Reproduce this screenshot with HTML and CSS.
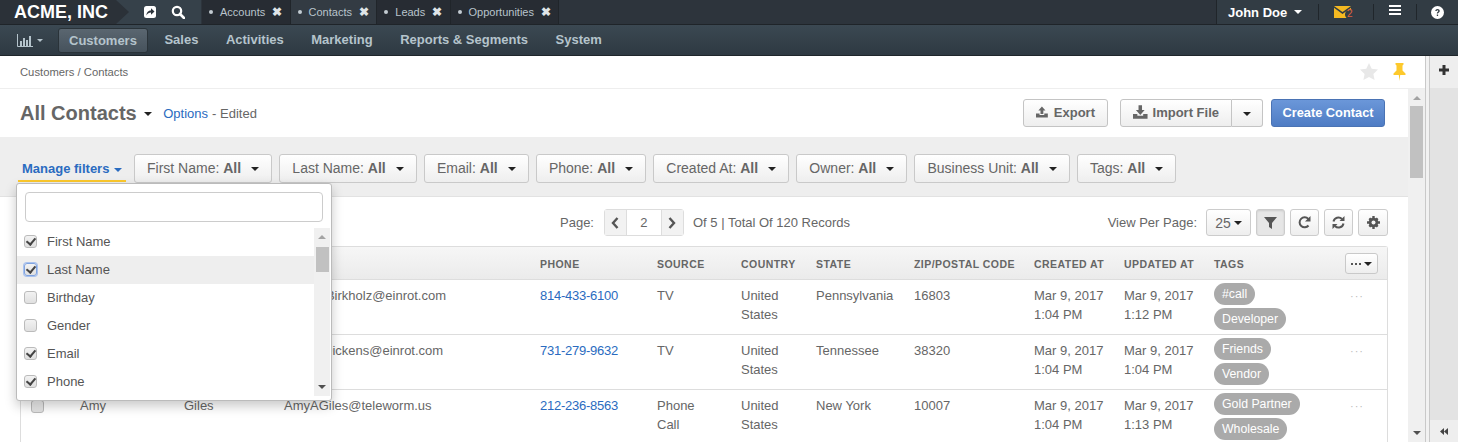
FILE: index.html

```html
<!DOCTYPE html>
<html>
<head>
  <title>All Contacts - Customers</title>
  <meta name="viewport" content="width=device-width, initial-scale=1.0">
  <link rel="stylesheet" href="styles.css">
</head>
<body>
  <header class="topbar">
    <div class="logo">ACME, INC</div>
    <div class="quick">
      <svg class="quick-icon" viewBox="0 0 14 14"><rect x="1" y="1" width="12" height="12" rx="2.5" fill="#fff"/><path d="M3.5 10.5c0-3.5 2-5 4.500-5V3.300L11.500 6.500 8 9.700V7.500c-2 0-3.500.8-4.500 3z" fill="#2c333b"/></svg>
      <svg class="quick-icon" viewBox="0 0 14 14"><circle cx="6" cy="6" r="4.200" fill="none" stroke="#fff" stroke-width="2.200"/><path d="M9 9l4 4" stroke="#fff" stroke-width="2.600" stroke-linecap="round"/></svg>
    </div>
    <nav class="tabs">
      <a class="tab"><i class="dot"></i>Accounts<b class="tab-close">&#10006;</b></a>
      <a class="tab tab-active"><i class="dot"></i>Contacts<b class="tab-close">&#10006;</b></a>
      <a class="tab"><i class="dot"></i>Leads<b class="tab-close">&#10006;</b></a>
      <a class="tab"><i class="dot"></i>Opportunities<b class="tab-close">&#10006;</b></a>
    </nav>
    <div class="user-area">
      <div class="user-cell user-name">John Doe <i class="caret caret-white"></i></div>
      <div class="user-cell user-mail">
        <svg width="18" height="12" viewBox="0 0 18 12"><path d="M0 0h17L8.500 6z" fill="#f5b921"/><path d="M0 1.800V12h17V1.800L8.500 8z" fill="#f5b921"/><circle cx="15.500" cy="8.500" r="4.500" fill="#323c44"/></svg>
        <span class="mail-count">2</span>
      </div>
      <div class="user-cell user-menu"><i class="burger"></i></div>
      <div class="user-cell user-help">
        <svg width="13" height="13" viewBox="0 0 13 13"><circle cx="6.500" cy="6.500" r="6.500" fill="#fff"/><path d="M4.300 5c0-1.300 1-2 2.200-2s2.200.7 2.200 1.900c0 1.500-1.700 1.500-1.700 2.700H5.800c0-1.900 1.500-1.800 1.500-2.700 0-.4-.4-.7-.8-.7-.5 0-.9.300-.9.800z" fill="#323c44"/><rect x="5.800" y="8.500" width="1.300" height="1.500" fill="#323c44"/></svg>
      </div>
    </div>
  </header>

  <nav class="navbar">
    <a class="nav-chart">
      <svg width="16" height="13" viewBox="0 0 16 13"><path d="M.5 0v12.500H16" fill="none" stroke="#b5c4cc"/><path d="M3 7h2v5H3zM6 4h2v8H6zM9 6h2v6H9zM12 2h2v10h-2z" fill="#b5c4cc"/></svg>
      <i class="caret caret-nav"></i>
    </a>
    <a class="nav-item nav-active">Customers</a>
    <a class="nav-item">Sales</a>
    <a class="nav-item">Activities</a>
    <a class="nav-item">Marketing</a>
    <a class="nav-item">Reports &amp; Segments</a>
    <a class="nav-item">System</a>
  </nav>

  <div class="workspace">
    <main class="main">
      <div class="breadcrumb">
        <span>Customers / Contacts</span>
        <div class="page-marks">
          <svg width="18" height="17" viewBox="0 0 18 17"><path d="M9 0l2.700 5.800 6.300.8-4.600 4.300 1.200 6.100L9 14l-5.600 3 1.200-6.100L0 6.600l6.300-.8z" fill="#e8e8e8"/></svg>
          <svg width="13" height="18" viewBox="0 0 13 18"><path d="M2.500 0h8v1.500L9.500 2.500v5l3 3V12H7.200l-.7 6-.7-6H.5v-1.500l3-3v-5l-1-1z" fill="#fdc92c"/></svg>
        </div>
      </div>

      <div class="content-wrap">
        <div class="content">
          <div class="title-row">
            <h1 class="page-title">All Contacts <i class="caret caret-dark"></i></h1>
            <a class="link options-link">Options</a>
            <span class="edited">- Edited</span>
            <div class="title-actions">
              <button class="btn btn-export">
                <svg width="15" height="14" viewBox="0 0 15 14"><path d="M7.500 0l4.500 5H9.300v4.500H5.700V5H3z" fill="#666"/><path d="M0 9h4.500v1.800h6V9H15v5H0z" fill="#666"/></svg>
                Export
              </button>
              <div class="btn-split">
                <button class="btn btn-import">
                  <svg width="15" height="14" viewBox="0 0 15 14"><path d="M5.700 0h3.600v5H12L7.500 10 3 5h2.700z" fill="#666"/><path d="M0 9h4.500v1.800h6V9H15v5H0z" fill="#666"/></svg>
                  Import File
                </button>
                <button class="btn btn-split-caret"><i class="caret caret-dark"></i></button>
              </div>
              <button class="btn btn-primary">Create Contact</button>
            </div>
          </div>

          <div class="filters">
            <a class="manage-filters">Manage filters <i class="caret caret-blue"></i></a>
            <button class="btn filter-btn">First Name: <b>All</b> <i class="caret caret-dark"></i></button>
            <button class="btn filter-btn">Last Name: <b>All</b> <i class="caret caret-dark"></i></button>
            <button class="btn filter-btn">Email: <b>All</b> <i class="caret caret-dark"></i></button>
            <button class="btn filter-btn">Phone: <b>All</b> <i class="caret caret-dark"></i></button>
            <button class="btn filter-btn">Created At: <b>All</b> <i class="caret caret-dark"></i></button>
            <button class="btn filter-btn">Owner: <b>All</b> <i class="caret caret-dark"></i></button>
            <button class="btn filter-btn">Business Unit: <b>All</b> <i class="caret caret-dark"></i></button>
            <button class="btn filter-btn">Tags: <b>All</b> <i class="caret caret-dark"></i></button>
          </div>

          <div class="pager-row">
            <div class="pager">
              <span>Page:</span>
              <div class="pager-box">
                <span class="pager-arrow"><svg width="8" height="12" viewBox="0 0 8 12"><path d="M6.500 1L2 6l4.500 5" fill="none" stroke="#555" stroke-width="2.400"/></svg></span>
                <span class="pager-num">2</span>
                <span class="pager-arrow"><svg width="8" height="12" viewBox="0 0 8 12"><path d="M1.500 1L6 6l-4.500 5" fill="none" stroke="#555" stroke-width="2.400"/></svg></span>
              </div>
              <span>Of 5 | Total Of 120 Records</span>
            </div>
            <div class="view-tools">
              <span class="view-label">View Per Page:</span>
              <button class="btn tool-btn per-page">25 <i class="caret caret-dark"></i></button>
              <button class="btn tool-btn tool-on">
                <svg width="13" height="13" viewBox="0 0 13 13"><path d="M0 1h13L8 7v6L5 11V7z" fill="#555"/></svg>
              </button>
              <button class="btn tool-btn">
                <svg width="13" height="13" viewBox="0 0 13 13"><path d="M10.500 9.500A5 5 0 1 1 10.300 3" fill="none" stroke="#555" stroke-width="2"/><path d="M12.500 0v5.500H7z" fill="#555"/></svg>
              </button>
              <button class="btn tool-btn">
                <svg width="13" height="13" viewBox="0 0 13 13"><path d="M1.500 5.500A5 5 0 0 1 10 3M11.500 7.500A5 5 0 0 1 3 10" fill="none" stroke="#555" stroke-width="2"/><path d="M12.500 0v5H7.500zM.5 13V8h5z" fill="#555"/></svg>
              </button>
              <button class="btn tool-btn tool-last">
                <svg width="13" height="13" viewBox="0 0 13 13"><mask id="gear-hole"><rect width="13" height="13" fill="#fff"/><circle cx="6.500" cy="6.500" r="2" fill="#000"/></mask><g fill="#555" mask="url(#gear-hole)"><circle cx="6.500" cy="6.500" r="4.800"/><path d="M5.300 0h2.400v13H5.300zM0 5.300h13v2.400H0zM1.500 3.200l1.700-1.700 8.300 8.300-1.700 1.700zM9.800 1.500l1.700 1.700-8.300 8.300-1.700-1.700z"/></g></svg>
              </button>
            </div>
          </div>

          <div class="grid-box">
            <table class="grid">
              <colgroup>
                <col class="c-check"><col class="c-first"><col class="c-last"><col class="c-email"><col class="c-phone"><col class="c-source"><col class="c-country"><col class="c-state"><col class="c-zip"><col class="c-created"><col class="c-updated"><col class="c-tags"><col class="c-act">
              </colgroup>
              <thead>
                <tr>
                  <th></th><th></th><th></th><th>Email</th><th>Phone</th><th>Source</th><th>Country</th><th>State</th><th>Zip/Postal Code</th><th>Created At</th><th>Updated At</th><th>Tags</th>
                  <th><span class="act-btn"><i class="act-dots"></i><i class="caret caret-dark"></i></span></th>
                </tr>
              </thead>
              <tbody>
                <tr>
                  <td></td><td></td><td></td><td>HelenTBirkholz@einrot.com</td><td><a class="link phone">814-433-6100</a></td><td>TV</td><td>United States</td><td>Pennsylvania</td><td>16803</td><td>Mar 9, 2017<br>1:04 PM</td><td>Mar 9, 2017<br>1:12 PM</td>
                  <td class="tag-cell"><span class="tag">#call</span><span class="tag">Developer</span></td><td class="row-act">&middot;&middot;&middot;</td>
                </tr>
                <tr>
                  <td></td><td></td><td></td><td>JoanMDickens@einrot.com</td><td><a class="link phone">731-279-9632</a></td><td>TV</td><td>United States</td><td>Tennessee</td><td>38320</td><td>Mar 9, 2017<br>1:04 PM</td><td>Mar 9, 2017<br>1:04 PM</td>
                  <td class="tag-cell"><span class="tag">Friends</span><span class="tag">Vendor</span></td><td class="row-act">&middot;&middot;&middot;</td>
                </tr>
                <tr>
                  <td><i class="check"></i></td><td>Amy</td><td>Giles</td><td>AmyAGiles@teleworm.us</td><td><a class="link phone">212-236-8563</a></td><td class="source-cell">Phone Call</td><td>United States</td><td>New York</td><td>10007</td><td>Mar 9, 2017<br>1:04 PM</td><td>Mar 9, 2017<br>1:13 PM</td>
                  <td class="tag-cell"><span class="tag">Gold Partner</span><span class="tag">Wholesale</span></td><td class="row-act">&middot;&middot;&middot;</td>
                </tr>
              </tbody>
            </table>
          </div>
        </div>

        <div class="scrollbar">
          <i class="arrow-up"></i>
          <i class="scroll-thumb"></i>
          <i class="arrow-down"></i>
        </div>

        <div class="filter-menu">
          <input class="filter-search" type="text">
          <div class="filter-list">
            <ul class="filter-items">
              <li><i class="check check-on"></i>First Name</li>
              <li class="filter-hover"><i class="check check-on check-focus"></i>Last Name</li>
              <li><i class="check"></i>Birthday</li>
              <li><i class="check"></i>Gender</li>
              <li><i class="check check-on"></i>Email</li>
              <li><i class="check check-on"></i>Phone</li>
            </ul>
            <div class="list-scroll">
              <i class="arrow-up"></i>
              <i class="list-thumb"></i>
              <i class="arrow-down"></i>
            </div>
          </div>
        </div>
      </div>
    </main>

    <div class="splitter"></div>

    <aside class="sidebar">
      <div class="side-top">
        <svg width="10" height="10" viewBox="0 0 10 10"><path d="M3.500 0h3v3.500H10v3H6.500V10h-3V6.500H0v-3h3.500z" fill="#333"/></svg>
      </div>
      <div class="side-body"></div>
      <div class="side-foot">
        <svg width="8" height="7" viewBox="0 0 8 7"><path d="M4 0v7L0 3.500zM8 0v7L4 3.500z" fill="#444"/></svg>
      </div>
    </aside>
  </div>
</body>
</html>
```

FILE: styles.css

```css
* {
  box-sizing: border-box;
}

html, body {
  margin: 0;
  height: 442px;
  overflow: hidden;
}

body {
  display: flex;
  flex-direction: column;
  font-family: "Liberation Sans", Arial, sans-serif;
  font-size: 13px;
  color: #666;
  background: #fff;
}

i {
  font-style: normal;
}

.link {
  color: #2a6bc0;
  text-decoration: none;
}

.caret {
  display: inline-block;
  width: 0;
  height: 0;
  vertical-align: middle;
  border-left: 4px solid transparent;
  border-right: 4px solid transparent;
  border-top: 4px solid #222;
}

.caret-white { border-top-color: #fff; }
.caret-blue { border-top-color: #2a6bc0; }
.caret-nav {
  border-left-width: 3px;
  border-right-width: 3px;
  border-top: 3px solid #b5c4cc;
}

/* top bar */
.topbar {
  flex: none;
  display: flex;
  height: 25px;
  background: linear-gradient(#36414a, #36414a) 0 0 / 201px 100% no-repeat #2d343c;
  border-bottom: 1px solid #1f2429;
}

.logo {
  width: 129px;
  padding: 2px 0 0 14px;
  font-size: 18px;
  line-height: 20px;
  font-weight: bold;
  color: #fff;
  background: #2b3138;
  clip-path: polygon(0 0, 116px 0, 129px 12px, 116px 24px, 0 24px);
}

.quick {
  width: 73px;
  display: flex;
  align-items: center;
  gap: 14px;
  padding-left: 14px;
}

.quick-icon {
  width: 14px;
  height: 14px;
}

.tabs {
  display: flex;
}

.tab {
  display: flex;
  align-items: center;
  padding: 0 7.300px 0 7px;
  font-size: 11px;
  color: #b9c4cc;
  background: #272c33;
  border-right: 1px solid #20252a;
}

.tab-active {
  background: #333b43;
}

.dot {
  width: 4px;
  height: 4px;
  margin-right: 7px;
  border-radius: 50%;
  background: #c3ccd2;
}

.tab-close {
  margin-left: 7px;
  font-size: 12px;
  color: #dfe4e7;
}

.user-area {
  margin-left: auto;
  width: 242px;
  display: flex;
  align-items: center;
  background: #323c44;
  border-left: 1px solid #20252a;
}

.user-cell {
  height: 16px;
  display: flex;
  align-items: center;
  justify-content: center;
  border-right: 1px solid #20262b;
}

.user-name {
  width: 102px;
  justify-content: flex-start;
  gap: 7px;
  padding-left: 11px;
  font-weight: bold;
  font-size: 13px;
  color: #fff;
}

.user-mail {
  width: 55px;
  position: relative;
  padding-right: 7px;
}

.mail-count {
  position: absolute;
  left: 28px;
  top: 5px;
  font-size: 10px;
  line-height: 10px;
  color: #e0603f;
}

.user-menu {
  width: 43px;
}

.burger {
  width: 12px;
  height: 10px;
  margin-top: -5px;
  border-top: 2px solid #fff;
  border-bottom: 2px solid #fff;
  background: linear-gradient(#fff, #fff) center / 100% 2px no-repeat;
}

.user-help {
  flex: 1;
  border-right: 0;
}

/* main nav */
.navbar {
  flex: none;
  display: flex;
  align-items: center;
  height: 31px;
  padding-left: 17px;
  background: linear-gradient(#3b4852, #2e3942);
  border-bottom: 1px solid #1f262b;
}

.nav-chart {
  display: flex;
  align-items: center;
  gap: 4px;
  width: 41px;
}

.nav-item {
  padding: 0 11px;
  height: 25px;
  line-height: 24px;
  margin-right: 5.500px;
  font-weight: bold;
  font-size: 13px;
  color: #b5c4cc;
}

.nav-active {
  background: linear-gradient(#5a6670, #46525c);
  border: 1px solid #2a3339;
  border-radius: 3px;
  padding: 0 10px;
}

/* page frame */
.workspace {
  flex: 1;
  display: flex;
  min-height: 0;
}

.main {
  flex: 1;
  min-width: 0;
  display: flex;
  flex-direction: column;
}

.breadcrumb {
  flex: none;
  height: 33px;
  padding: 0 19px 0 20px;
  display: flex;
  align-items: center;
  justify-content: space-between;
  font-size: 11.250px;
  border-bottom: 1px solid #eee;
}

.page-marks {
  display: flex;
  align-items: center;
  gap: 15px;
  margin-top: -1px;
}

.content-wrap {
  flex: 1;
  min-height: 0;
  display: flex;
  position: relative;
}

.content {
  flex: 1;
  min-width: 0;
  overflow: hidden;
}

.title-row {
  height: 48px;
  display: flex;
  align-items: center;
  padding: 0 23px 0 20px;
}

.page-title {
  margin: 0 11px 0 0;
  font-size: 20px;
  font-weight: bold;
  color: #666;
}

.page-title .caret {
  margin-left: 2px;
}

.options-link {
  margin-right: 4px;
}

.title-actions {
  margin-left: auto;
  display: flex;
  gap: 12px;
}

.btn {
  height: 28px;
  padding: 0 12px;
  font: 13px "Liberation Sans", Arial, sans-serif;
  color: #666;
  background: linear-gradient(#fff, #eee);
  border: 1px solid #c4c4c4;
  border-radius: 3px;
  white-space: nowrap;
}

.btn-export,
.btn-import {
  display: flex;
  align-items: center;
  gap: 5px;
  padding-bottom: 2px;
  font-weight: bold;
  font-size: 13px;
}

.btn-export {
  width: 85px;
  gap: 6px;
}

.btn-import {
  width: 112px;
  border-radius: 3px 0 0 3px;
}

.btn-split {
  display: flex;
  margin-right: -4px;
}

.btn-split-caret {
  width: 31px;
  padding: 0;
  border-left: 0;
  border-radius: 0 3px 3px 0;
}

.btn-primary {
  width: 114px;
  padding: 0 0 2px;
  font-size: 12.800px;
  font-weight: bold;
  color: #fff;
  background: linear-gradient(#6b97d9, #4e7cc4);
  border-color: #4a73b4;
}

/* filters */
.filters {
  height: 60px;
  display: flex;
  align-items: center;
  gap: 7px;
  padding: 3px 0 0 18px;
  background: #eee;
  border-bottom: 1px solid #e2e2e2;
}

.manage-filters {
  width: 108px;
  height: 27px;
  margin: 1px 1px 0 0;
  padding: 6px 0 0 4px;
  font-weight: bold;
  color: #2a6bc0;
  border-bottom: 2px solid #fdc92c;
}

.manage-filters .caret {
  margin-left: 1px;
}

.filter-btn {
  height: 29px;
  font-size: 14px;
  border-color: #c9c9c9;
}

.filter-btn b {
  color: #666;
}

.filter-btn .caret {
  margin-left: 6.350px;
}

/* pager */
.pager-row {
  height: 49px;
  padding: 2px 20px 0 560px;
  display: flex;
  align-items: center;
  justify-content: space-between;
}

.pager {
  display: flex;
  align-items: center;
  gap: 10px;
}

.pager-box {
  width: 80px;
  height: 27px;
  margin-right: -1px;
  display: flex;
  border: 1px solid #ddd;
  border-radius: 3px;
}

.pager-arrow {
  width: 21px;
  display: flex;
  align-items: center;
  justify-content: center;
  background: #f2f2f2;
}

.pager-num {
  flex: 1;
  text-align: center;
  line-height: 25px;
  font-size: 13px;
  border-left: 1px solid #ddd;
  border-right: 1px solid #ddd;
}

.view-tools {
  display: flex;
  align-items: center;
  gap: 5px;
}

.view-label {
  margin-right: 4px;
}

.tool-btn {
  width: 29px;
  height: 27px;
  padding: 0;
  display: flex;
  align-items: center;
  justify-content: center;
  border-color: #ccc;
}

.tool-last {
  width: 30px;
}

.per-page {
  width: 45px;
  gap: 3px;
  font-size: 14px;
}

.tool-on {
  background: #e6e6e6;
  box-shadow: inset 0 1px 2px rgba(0, 0, 0, .12);
}

/* table */
.grid-box {
  width: 1368px;
  margin-left: 20px;
  border: 1px solid #ddd;
  border-bottom: 0;
  border-radius: 3px 3px 0 0;
}

.grid {
  width: 100%;
  table-layout: fixed;
  border-collapse: collapse;
}

.c-check { width: 59px; }
.c-first { width: 104px; }
.c-last { width: 100px; }
.c-email { width: 256px; }
.c-phone { width: 117px; }
.c-source { width: 84px; }
.c-country { width: 75px; }
.c-state { width: 98px; }
.c-zip { width: 120px; }
.c-created { width: 90px; }
.c-updated { width: 90px; }
.c-tags { width: 131px; }

.grid th {
  height: 32px;
  padding: 2px 0 0;
  text-align: left;
  text-transform: uppercase;
  font-size: 10.500px;
  letter-spacing: .45px;
  color: #666;
  background: linear-gradient(#f6f6f6, #ebebeb);
  border-bottom: 1px solid #ddd;
}

.grid td {
  height: 55px;
  padding: 6px 8px 0 0;
  vertical-align: top;
  line-height: 19px;
  border-bottom: 1px solid #ddd;
}

.grid td:first-child {
  padding: 10px 0 0 10px;
}

.grid .source-cell {
  padding-right: 30px;
}

.phone {
  letter-spacing: -.25px;
}

.grid .tag-cell {
  padding: 3px 0 0;
  line-height: 0;
}

.tag {
  display: block;
  width: fit-content;
  height: 22px;
  margin-bottom: 3px;
  padding: 0 8px;
  line-height: 22px;
  font-size: 12.300px;
  color: #fff;
  background: #aaa;
  border-radius: 11px;
}

.grid .row-act {
  padding: 0 0 0 5px;
  font-size: 11px;
  line-height: 32px;
  letter-spacing: 1px;
  color: #bbb;
}

.act-btn {
  display: flex;
  align-items: center;
  justify-content: center;
  gap: 3px;
  width: 33px;
  height: 21px;
  background: linear-gradient(#fff, #eee);
  border: 1px solid #c9c9c9;
  border-radius: 3px;
}

.act-dots {
  width: 10px;
  height: 2px;
  background: repeating-linear-gradient(90deg, #555 0 2px, transparent 2px 4px);
}

.check {
  display: block;
  flex: none;
  width: 13px;
  height: 13px;
  background: linear-gradient(#f2f2f2, #e0e0e0);
  border: 1px solid #bbb;
  border-radius: 3px;
}

.check-on {
  position: relative;
}

.check-on::after {
  content: "";
  position: absolute;
  left: 3px;
  top: 0;
  width: 4px;
  height: 7px;
  border: solid #444;
  border-width: 0 2px 2px 0;
  transform: rotate(40deg);
}

.check-focus {
  border-color: #7fa3e0;
  box-shadow: 0 0 0 1px #a9c2ee;
}

/* page scrollbar */
.scrollbar {
  width: 17px;
  flex: none;
  display: flex;
  flex-direction: column;
  align-items: center;
  background: #f0f0f0;
}

.arrow-up,
.arrow-down {
  width: 0;
  height: 0;
  border-left: 4px solid transparent;
  border-right: 4px solid transparent;
}

.arrow-up {
  margin-top: 7px;
  border-bottom: 4px solid #a3a3a3;
}

.arrow-down {
  margin-top: auto;
  margin-bottom: 7px;
  border-top: 4px solid #505050;
}

.scroll-thumb {
  width: 13px;
  height: 72px;
  margin-top: 6px;
  background: #c1c1c1;
}

/* filter dropdown */
.filter-menu {
  position: absolute;
  left: 16px;
  top: 94px;
  width: 316px;
  height: 218px;
  padding: 8px 1px 0 0;
  background: #fff;
  border: 1px solid #bbb;
  border-radius: 3px;
  box-shadow: 0 5px 12px rgba(0, 0, 0, .22);
}

.filter-search {
  display: block;
  width: 298px;
  height: 30px;
  margin-left: 8px;
  border: 1px solid #ccc;
  border-radius: 4px;
  background: #fff;
}

.filter-list {
  height: 168px;
  margin-top: 6px;
  display: flex;
}

.filter-items {
  flex: 1;
  margin: 0;
  padding: 0;
  list-style: none;
}

.filter-items li {
  height: 28px;
  display: flex;
  align-items: center;
  gap: 10px;
  padding: 0 0 2px 7px;
  font-size: 13px;
  color: #555;
}

.filter-hover {
  background: #eee;
}

.list-scroll {
  width: 16px;
  display: flex;
  flex-direction: column;
  align-items: center;
  background: #f0f0f0;
}

.list-thumb {
  width: 13px;
  height: 25px;
  margin-top: 8px;
  background: #c1c1c1;
}

/* right side panel */
.splitter {
  width: 5px;
  flex: none;
  background: #f2f2f2;
  border-left: 1px solid #c9c9c9;
  border-right: 1px solid #c9c9c9;
}

.sidebar {
  width: 28px;
  flex: none;
  display: flex;
  flex-direction: column;
  background: #e3e3e3;
}

.side-top {
  height: 32px;
  padding-top: 7px;
  text-align: center;
  background: #eee;
}

.side-body {
  flex: 1;
}

.side-foot {
  height: 22px;
  display: flex;
  align-items: center;
  justify-content: center;
  background: #eee;
}
```
